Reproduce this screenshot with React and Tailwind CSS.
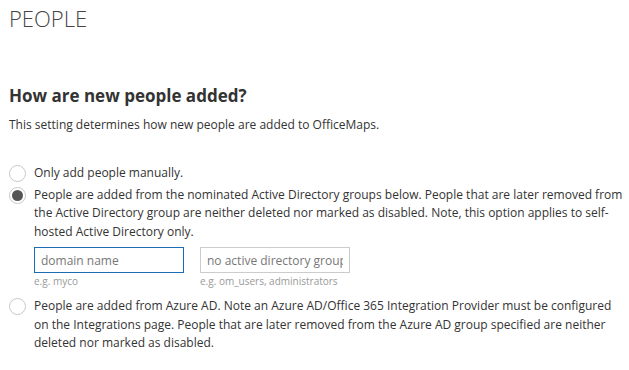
import React, { useState } from 'react';

function Radio({ checked, onClick }) {
  return (
    <button
      type="button"
      onClick={onClick}
      className="mt-[1px] flex h-[17px] w-[17px] flex-none items-center justify-center rounded-full border border-[#c8c8c8] bg-white"
    >
      {checked && <span className="block h-[11px] w-[11px] rounded-full bg-[#555]" />}
    </button>
  );
}

function App() {
  const [mode, setMode] = useState('ad');

  return (
    <div className="min-h-screen bg-white pl-[9px] pr-[4px] pt-[3px] text-[#333] font-['Open_Sans',sans-serif]">
      <h1 className="text-[22px] font-light leading-[30px] text-[#444]">PEOPLE</h1>

      <h2 className="mt-[51px] text-[17px] font-bold leading-[24px] text-[#333]">How are new people added?</h2>
      <p className="mt-[8px] text-[12px] leading-[18px]">
        This setting determines how new people are added to OfficeMaps.
      </p>

      <div className="mt-[30px] flex flex-col gap-[3px] text-[12px] leading-[18.5px]">
        <div className="flex gap-[8px]">
          <Radio checked={mode === 'manual'} onClick={() => setMode('manual')} />
          <span>Only add people manually.</span>
        </div>

        <div className="flex gap-[8px]">
          <Radio checked={mode === 'ad'} onClick={() => setMode('ad')} />
          <div>
            <p>
              People are added from the nominated Active Directory groups below. People that are later removed from
              the Active Directory group are neither deleted nor marked as disabled. Note, this option applies to
              self-hosted Active Directory only.
            </p>
            <div className="mt-[6px] flex gap-[16px]">
              <div>
                <input
                  placeholder="domain name"
                  className="h-[26px] w-[150px] border border-[#1a6db5] px-[6px] text-[12px] outline-none placeholder:text-[#777]"
                />
                <p className="mt-[1px] text-[10px] leading-[14px] text-[#999]">e.g. myco</p>
              </div>
              <div>
                <input
                  placeholder="no active directory groups"
                  className="h-[26px] w-[150px] border border-[#ccc] px-[6px] text-[12px] outline-none placeholder:text-[#777]"
                />
                <p className="mt-[1px] text-[10px] leading-[14px] text-[#999]">e.g. om_users, administrators</p>
              </div>
            </div>
          </div>
        </div>

        <div className="mt-[6px] flex gap-[8px]">
          <Radio checked={mode === 'azure'} onClick={() => setMode('azure')} />
          <p>
            People are added from Azure AD. Note an Azure AD/Office 365 Integration Provider must be configured on
            the Integrations page. People that are later removed from the Azure AD group specified are neither
            deleted nor marked as disabled.
          </p>
        </div>
      </div>
    </div>
  );
}

export default App;
